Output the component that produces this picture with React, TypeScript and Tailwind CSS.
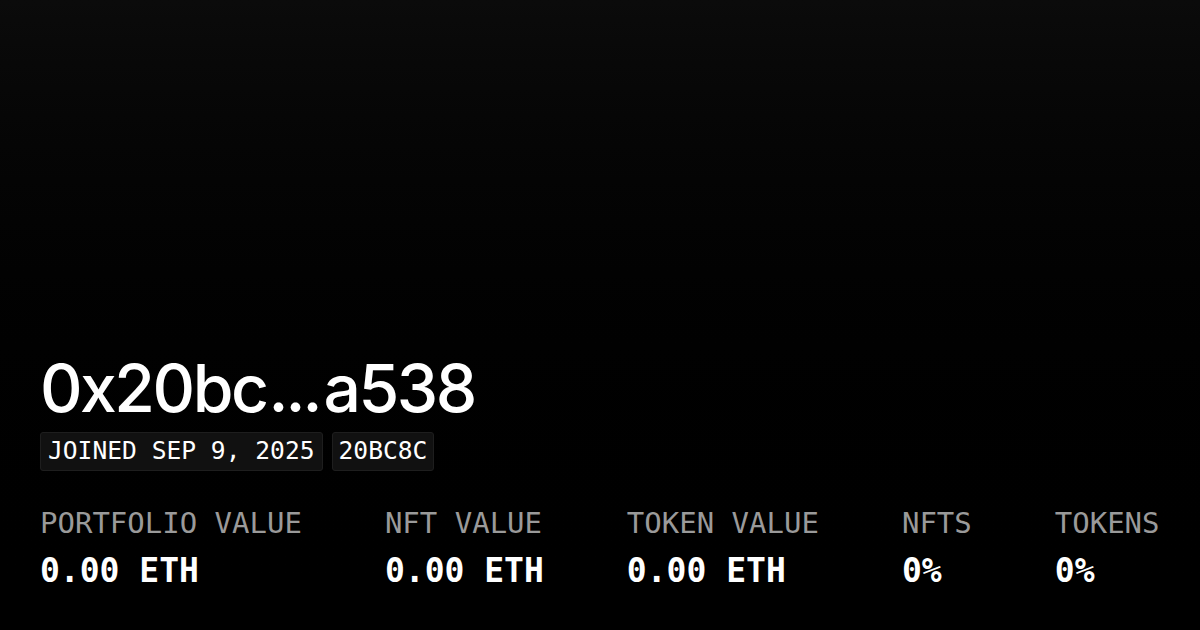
import React from "react";

const stats = [
  { label: "PORTFOLIO VALUE", value: "0.00 ETH" },
  { label: "NFT VALUE", value: "0.00 ETH" },
  { label: "TOKEN VALUE", value: "0.00 ETH" },
  { label: "NFTS", value: "0%" },
  { label: "TOKENS", value: "0%" },
];

export default function App() {
  return (
    <div className="w-[1200px] h-[630px] bg-gradient-to-b from-[#0b0b0b] to-[#000000] flex flex-col justify-end px-[40px] pb-[43px] overflow-hidden">
      <div
        className="text-white text-[66px] leading-[1] font-medium tracking-[-2.5px] whitespace-nowrap"
        style={{ fontFamily: "Inter, 'Noto Sans', sans-serif" }}
      >
        0x20bc<span className="tracking-[-3px] ml-[2px] mr-[4px]">...</span>a538
      </div>
      <div
        className="flex gap-[9px] mt-[11px] text-[24.6px] leading-none text-white"
        style={{ fontFamily: "'DejaVu Sans Mono', monospace" }}
      >
        <div className="bg-[#111111] border border-[#1e1e1e] rounded-[3px] px-[7px] h-[39px] flex items-center whitespace-nowrap">
          JOINED SEP 9, 2025
        </div>
        <div className="bg-[#111111] border border-[#1e1e1e] rounded-[3px] px-[6px] h-[39px] flex items-center whitespace-nowrap">
          20BC8C
        </div>
      </div>
      <div
        className="flex gap-[83px] mt-[38px]"
        style={{ fontFamily: "'DejaVu Sans Mono', monospace" }}
      >
        {stats.map((s) => (
          <div key={s.label} className="flex flex-col shrink-0 whitespace-nowrap">
            <div className="text-[29px] leading-[1] text-[#9a9a9a]">{s.label}</div>
            <div className="text-[33px] leading-[1] font-bold text-white mt-[16px]">{s.value}</div>
          </div>
        ))}
      </div>
    </div>
  );
}
